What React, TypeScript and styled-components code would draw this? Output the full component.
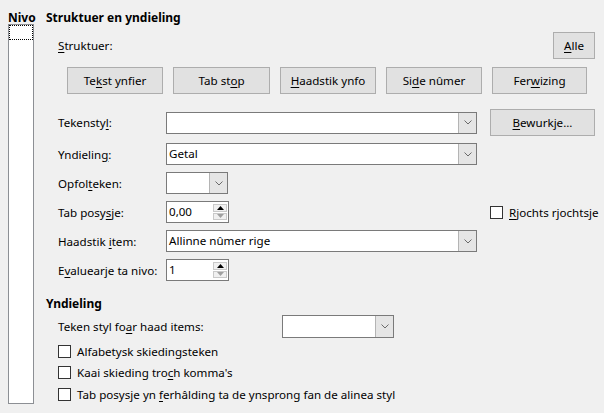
import React from 'react';
import styled, { createGlobalStyle } from 'styled-components';

const Global = createGlobalStyle`
  html, body { margin: 0; padding: 0; background: #f0f0f0; }
  body {
    font-family: "Noto Sans", "Open Sans", sans-serif;
    font-size: 11.6px;
    color: #000;
    width: 604px;
    height: 413px;
    overflow: hidden;
  }
  u { text-underline-offset: 2px; }
`;

const Page = styled.div`
  display: flex;
  gap: 12px;
  padding: 9px 9px 0 8px;
  height: 413px;
  box-sizing: border-box;
`;

const NivoCol = styled.div`
  display: flex;
  flex-direction: column;
  width: 26px;
`;

const Title = styled.div<{ $h?: number }>`
  font-weight: bold;
  font-size: 12px;
  height: ${(p) => p.$h ?? 16}px;
  line-height: 17px;
  white-space: nowrap;
`;

const ListBox = styled.div`
  height: 380px;
  border: 1px solid #8c8f94;
  background: #fff;
  box-sizing: border-box;
`;

const FocusItem = styled.div`
  height: 15px;
  border: 1px dotted #000;
  box-sizing: border-box;
`;

const Main = styled.div`
  flex: 1;
  min-width: 0;
  display: flex;
  flex-direction: column;
`;

const StructRow = styled.div`
  margin-top: 7px;
  padding-left: 12px;
  height: 27px;
  display: flex;
  align-items: center;
  justify-content: space-between;
`;

const Label = styled.span`
  white-space: nowrap;
`;

const Button = styled.button<{ $w: number }>`
  width: ${(p) => p.$w}px;
  height: 27px;
  background: #e1e1e1;
  border: 1px solid #adadad;
  font: inherit;
  color: #000;
  padding: 0;
  flex: none;
  white-space: nowrap;
`;

const ButtonRow = styled.div`
  margin-top: 8px;
  padding-left: 21px;
  display: flex;
  gap: 10px;
`;

const FormGrid = styled.div`
  margin-top: 15px;
  padding-left: 12px;
  display: grid;
  grid-template-columns: 108px 311px 1fr;
  grid-template-rows: 27px;
  grid-auto-rows: 22px;
  row-gap: 7px;
  align-items: center;
`;

const SideCell = styled.div`
  margin-left: 13px;
  display: flex;
  align-items: center;
`;

const ComboBox = styled.div<{ $w?: number; $h?: number }>`
  display: flex;
  width: ${(p) => (p.$w ? `${p.$w}px` : '100%')};
  height: ${(p) => p.$h ?? 22}px;
  border: 1px solid #7a7a7a;
  background: #fff;
  box-sizing: border-box;
`;

const ComboText = styled.div`
  flex: 1;
  padding-left: 2px;
  line-height: 20px;
  white-space: nowrap;
  overflow: hidden;
`;

const DropButton = styled.div`
  width: 17px;
  background: #e5e5e5;
  border-left: 1px solid #b4b4b4;
  display: flex;
  align-items: center;
  justify-content: center;
`;

const Spin = styled.div<{ $w: number }>`
  display: flex;
  width: ${(p) => p.$w}px;
  height: 22px;
  border: 1px solid #7a7a7a;
  background: #fff;
  box-sizing: border-box;
`;

const SpinButtons = styled.div`
  width: 15px;
  display: flex;
  flex-direction: column;
  padding: 2px 1px 2px 0;
  gap: 1px;
  box-sizing: border-box;
`;

const SpinBtn = styled.div`
  flex: 1;
  background: #f0f0f0;
  border: 1px solid #c9c9c9;
  display: flex;
  align-items: center;
  justify-content: center;
`;

const CheckRow = styled.label<{ $h?: number }>`
  display: flex;
  align-items: center;
  gap: 6px;
  height: ${(p) => p.$h ?? 21}px;
  white-space: nowrap;
`;

const Box = styled.span`
  width: 13px;
  height: 13px;
  border: 1px solid #333;
  background: #fff;
  box-sizing: border-box;
  flex: none;
`;

const SecondTitle = styled(Title)`
  margin-top: 14px;
`;

const StyleRow = styled.div`
  margin-top: 4px;
  padding-left: 12px;
  height: 23px;
  display: grid;
  grid-template-columns: 224px 112px;
  align-items: center;
`;

const Checks = styled.div`
  margin-top: 3px;
  padding-left: 12px;
  display: flex;
  flex-direction: column;
`;

const Chevron = () => (
  <svg width="8" height="5" viewBox="0 0 8 5">
    <path d="M0.5 0.5 L4 4 L7.5 0.5" fill="none" stroke="#6a6a6a" strokeWidth="1" />
  </svg>
);

const Up = () => (
  <svg width="7" height="4" viewBox="0 0 7 4">
    <path d="M0 4 L3.5 0 L7 4 Z" fill="#000" />
  </svg>
);
const Down = () => (
  <svg width="7" height="4" viewBox="0 0 7 4">
    <path d="M0 0 L3.5 4 L7 0 Z" fill="#a0a0a0" />
  </svg>
);

const Combo: React.FC<{ text?: string; w?: number; h?: number }> = ({ text, w, h }) => (
  <ComboBox $w={w} $h={h}>
    <ComboText>{text}</ComboText>
    <DropButton>
      <Chevron />
    </DropButton>
  </ComboBox>
);

const SpinField: React.FC<{ value: string }> = ({ value }) => (
  <Spin $w={63}>
    <ComboText>{value}</ComboText>
    <SpinButtons>
      <SpinBtn>
        <Up />
      </SpinBtn>
      <SpinBtn>
        <Down />
      </SpinBtn>
    </SpinButtons>
  </Spin>
);

export default function App() {
  return (
    <>
      <Global />
      <Page>
        <NivoCol>
          <Title $h={15}>
            <u>N</u>ivo
          </Title>
          <ListBox>
            <FocusItem />
          </ListBox>
        </NivoCol>
        <Main>
          <Title>Struktuer en yndieling</Title>
          <StructRow>
            <Label>
              <u>S</u>truktuer:
            </Label>
            <Button $w={42}>
              <u>A</u>lle
            </Button>
          </StructRow>
          <ButtonRow>
            <Button $w={96}>
              Te<u>k</u>st ynfier
            </Button>
            <Button $w={97}>
              Tab st<u>o</u>p
            </Button>
            <Button $w={96}>
              <u>H</u>aadstik ynfo
            </Button>
            <Button $w={96}>
              Si<u>d</u>e nûmer
            </Button>
            <Button $w={95}>
              Fer<u>w</u>izing
            </Button>
          </ButtonRow>
          <FormGrid>
            <Label>
              Tekensty<u>l</u>:
            </Label>
            <Combo />
            <SideCell>
              <Button $w={105}>
                <u>B</u>ewurkje...
              </Button>
            </SideCell>

            <Label>
              Yndielin<u>g</u>:
            </Label>
            <Combo text="Getal" />
            <span />

            <Label>
              Opfol<u>t</u>eken:
            </Label>
            <Combo w={62} />
            <span />

            <Label>
              Tab posy<u>s</u>je:
            </Label>
            <SpinField value="0,00" />
            <SideCell>
              <CheckRow>
                <Box />
                <span>
                  <u>R</u>jochts rjochtsje
                </span>
              </CheckRow>
            </SideCell>

            <Label>
              Haadstik <u>i</u>tem:
            </Label>
            <Combo text="Allinne nûmer rige" />
            <span />

            <Label>
              E<u>v</u>aluearje ta nivo:
            </Label>
            <SpinField value="1" />
            <span />
          </FormGrid>
          <SecondTitle>Yndieling</SecondTitle>
          <StyleRow>
            <Label>
              Teken styl fo<u>a</u>r haad items:
            </Label>
            <Combo w={112} h={23} />
          </StyleRow>
          <Checks>
            <CheckRow>
              <Box />
              <span>Alfabetysk skiedingsteken</span>
            </CheckRow>
            <CheckRow>
              <Box />
              <span>
                Kaai skieding tro<u>c</u>h komma's
              </span>
            </CheckRow>
            <CheckRow $h={22}>
              <Box />
              <span>
                Tab posysje yn <u>f</u>erhâlding ta de ynsprong fan de alinea styl
              </span>
            </CheckRow>
          </Checks>
        </Main>
      </Page>
    </>
  );
}
